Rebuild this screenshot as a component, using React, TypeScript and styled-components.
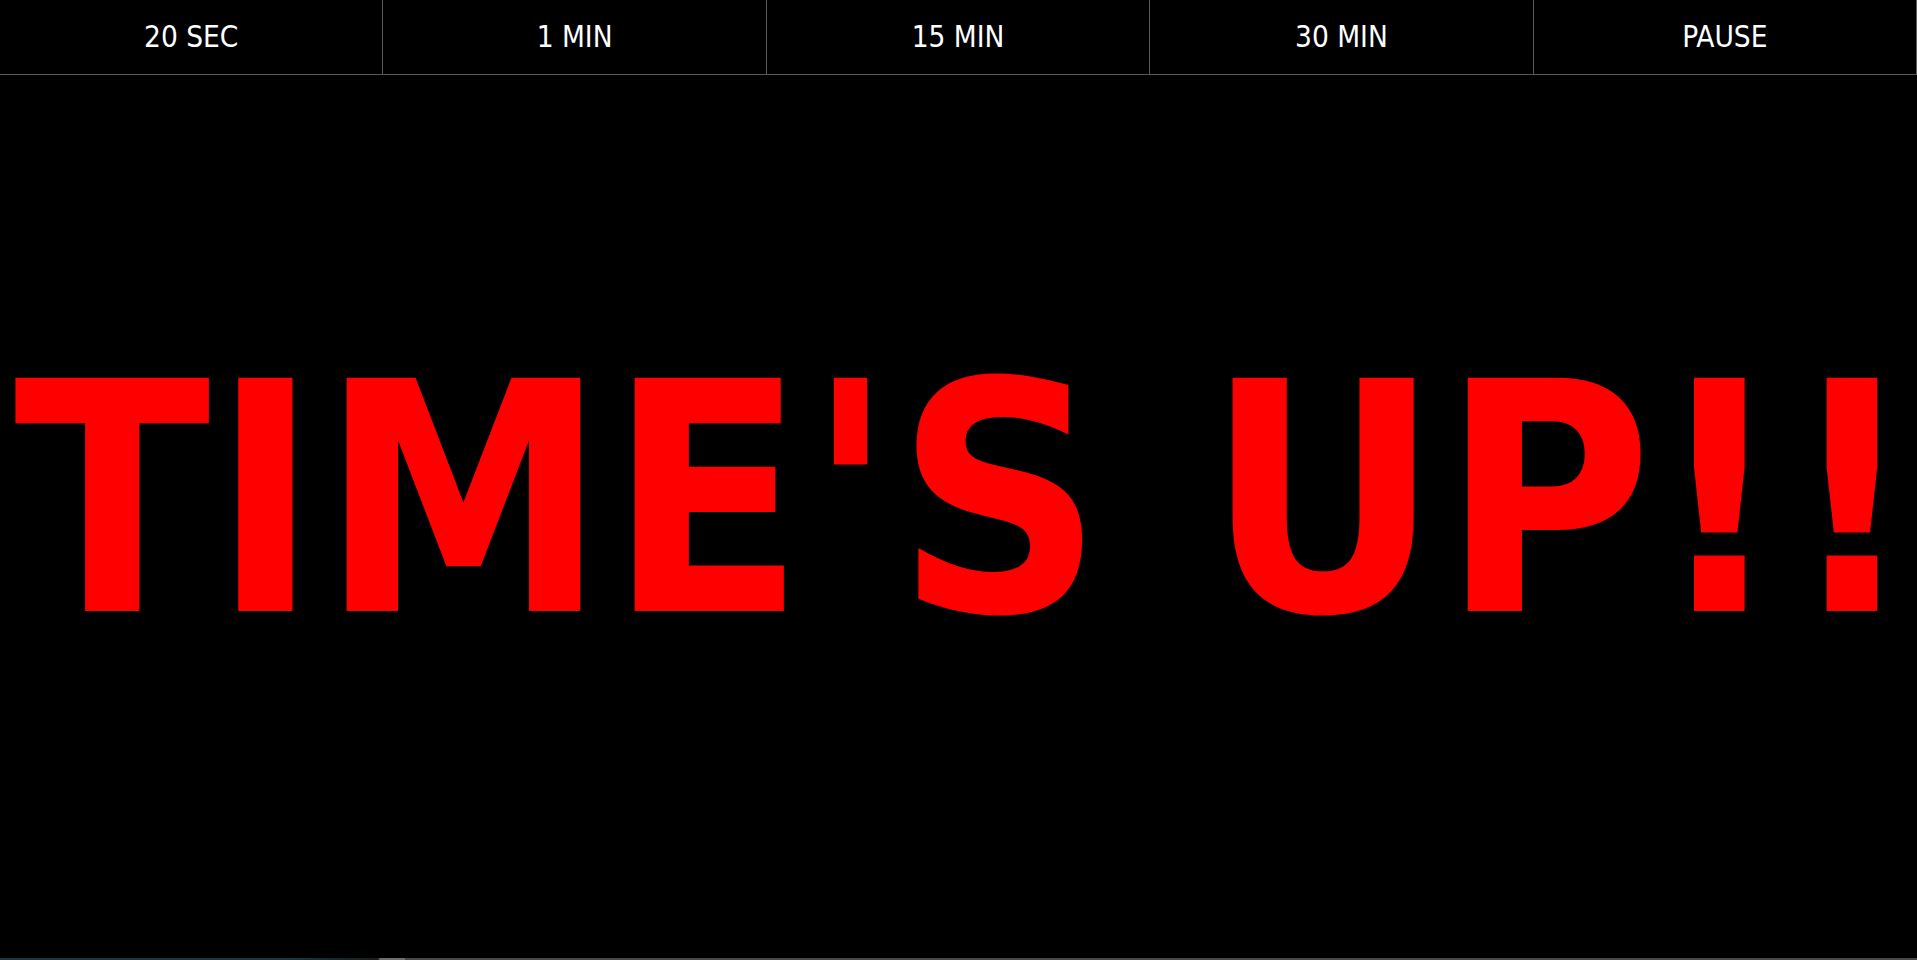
import React from "react";
import styled, { createGlobalStyle } from "styled-components";

const GlobalStyle = createGlobalStyle`
  html, body, #root {
    margin: 0;
    padding: 0;
    height: 100%;
    background: #000;
  }
  body {
    overflow: hidden;
    font-family: "DejaVu Sans Condensed", "DejaVu Sans", "Liberation Sans", sans-serif;
  }
`;

const Page = styled.div`
  height: 100vh;
  display: flex;
  flex-direction: column;
  background: #000;
`;

const Toolbar = styled.nav`
  display: flex;
  height: 74px;
  border-bottom: 1px solid #5a5a5a;
  flex-shrink: 0;
`;

const TimerButton = styled.button`
  flex: 1 1 0;
  min-width: 0;
  height: 100%;
  margin: 0;
  padding: 0;
  background: #000;
  color: #fff;
  border: none;
  border-right: 1px solid #5a5a5a;
  font-family: "DejaVu Sans Condensed", "DejaVu Sans", "Liberation Sans", sans-serif;
  font-stretch: condensed;
  font-size: 29.5px;
  font-weight: 400;
  cursor: pointer;
  display: flex;
  align-items: center;
  justify-content: center;
`;

const Stage = styled.main`
  flex: 1;
  display: flex;
  align-items: center;
  justify-content: center;
  padding: 0 0 33px 0;
  min-width: 0;
`;

const Message = styled.h1`
  margin: 0;
  padding: 0;
  color: #ff0000;
  font-family: "DejaVu Sans Condensed", "DejaVu Sans", "Liberation Sans", sans-serif;
  font-stretch: condensed;
  font-weight: 700;
  font-size: 320px;
  line-height: normal;
  white-space: nowrap;
  letter-spacing: 1.4px;
  text-align: center;
  transform: translateX(8px);
`;

const BottomStrip = styled.div`
  height: 2px;
  flex-shrink: 0;
  background: linear-gradient(
    to right,
    #17363f 0px,
    #17363f 290px,
    #1c1c1c 378px,
    #6e6e6e 380px,
    #6e6e6e 405px,
    #474747 405px,
    #474747 100%
  );
`;

const options = ["20 SEC", "1 MIN", "15 MIN", "30 MIN", "PAUSE"];

export default function App() {
  return (
    <>
      <GlobalStyle />
      <Page>
        <Toolbar>
          {options.map((o) => (
            <TimerButton key={o}>{o}</TimerButton>
          ))}
        </Toolbar>
        <Stage>
          <Message>TIME'S UP!!</Message>
        </Stage>
        <BottomStrip />
      </Page>
    </>
  );
}
